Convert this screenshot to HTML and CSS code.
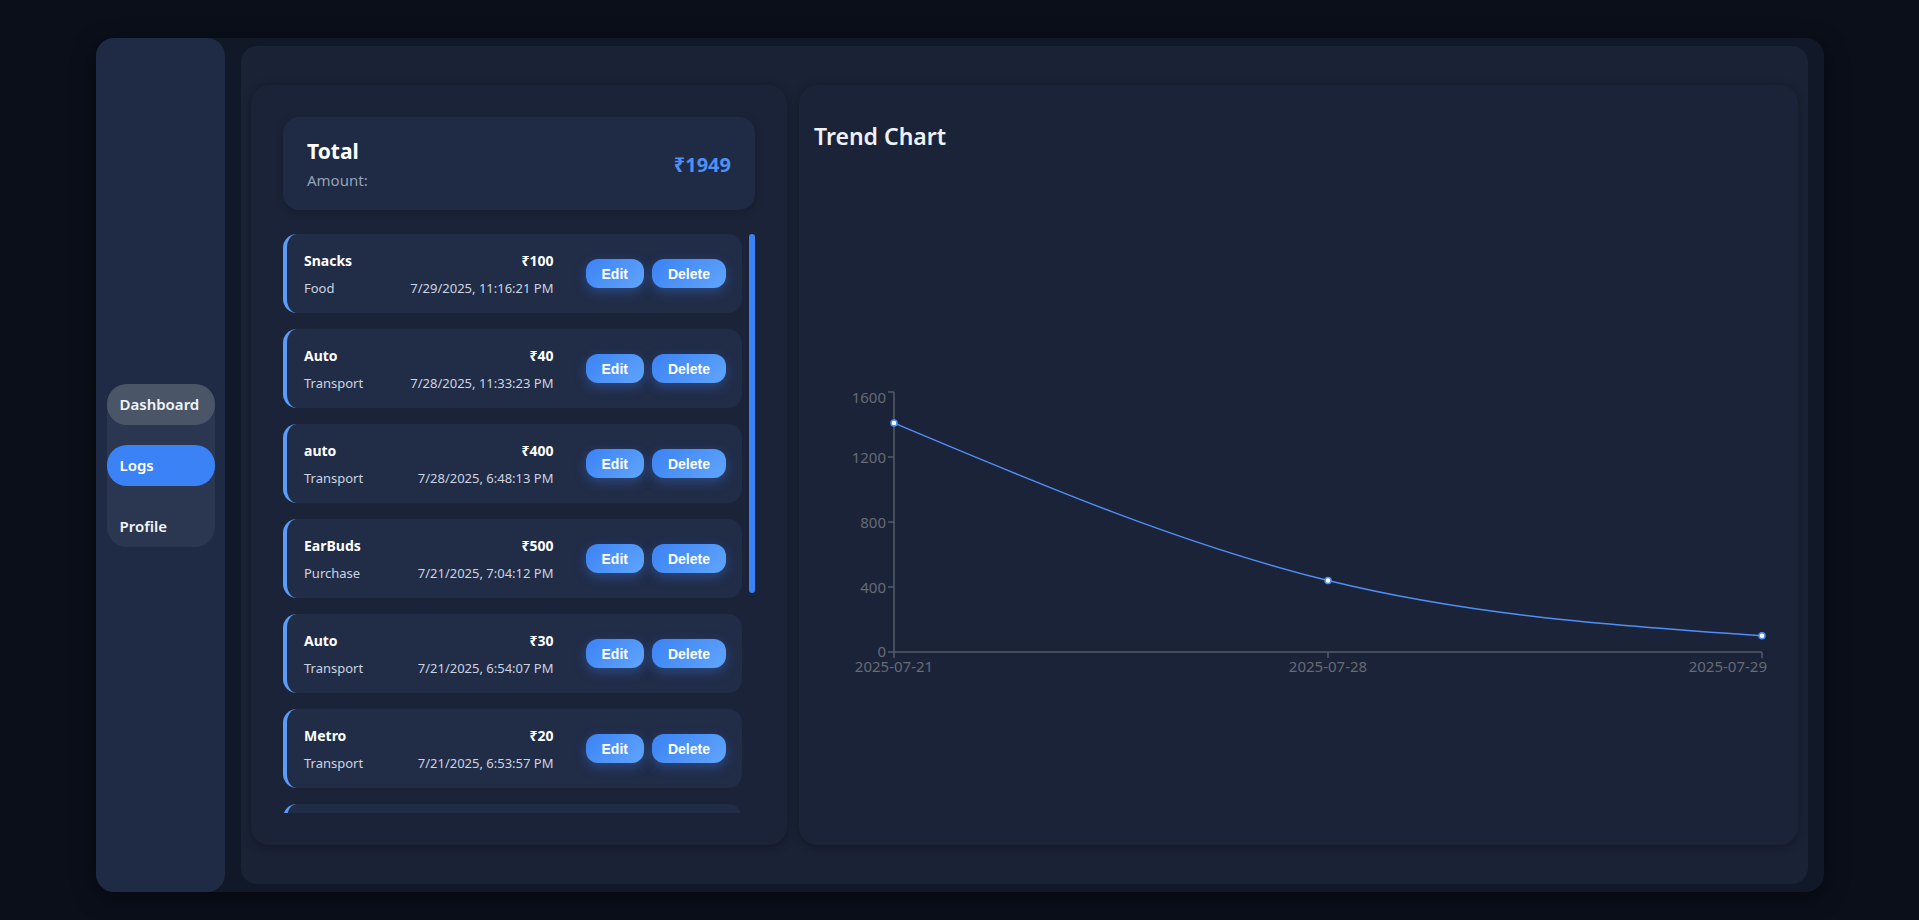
FILE: index.html
```html
<!DOCTYPE html>
<html lang="en">
<head>
<meta charset="utf-8">
<title>Logs</title>
<link rel="stylesheet" href="styles.css">
</head>
<body>
<div class="app">
  <aside class="sidebar">
    <nav class="nav">
      <a class="nav-item nav-dashboard">Dashboard</a>
      <a class="nav-item nav-active">Logs</a>
      <a class="nav-item">Profile</a>
    </nav>
  </aside>
  <main class="main">
    <section class="panel logs-panel">
      <div class="total-card">
        <div class="total-text">
          <div class="total-title">Total</div>
          <div class="total-sub">Amount:</div>
        </div>
        <div class="total-value">₹1949</div>
      </div>
      <div class="log-scroll">
        <div class="log-list">
          <div class="log-card">
            <div class="log-info">
              <div class="log-row"><span class="log-name">Snacks</span><span class="log-amount">₹100</span></div>
              <div class="log-row log-meta"><span>Food</span><span>7/29/2025, 11:16:21 PM</span></div>
            </div>
            <div class="log-actions"><button class="btn">Edit</button><button class="btn">Delete</button></div>
          </div>
          <div class="log-card">
            <div class="log-info">
              <div class="log-row"><span class="log-name">Auto</span><span class="log-amount">₹40</span></div>
              <div class="log-row log-meta"><span>Transport</span><span>7/28/2025, 11:33:23 PM</span></div>
            </div>
            <div class="log-actions"><button class="btn">Edit</button><button class="btn">Delete</button></div>
          </div>
          <div class="log-card">
            <div class="log-info">
              <div class="log-row"><span class="log-name">auto</span><span class="log-amount">₹400</span></div>
              <div class="log-row log-meta"><span>Transport</span><span>7/28/2025, 6:48:13 PM</span></div>
            </div>
            <div class="log-actions"><button class="btn">Edit</button><button class="btn">Delete</button></div>
          </div>
          <div class="log-card">
            <div class="log-info">
              <div class="log-row"><span class="log-name">EarBuds</span><span class="log-amount">₹500</span></div>
              <div class="log-row log-meta"><span>Purchase</span><span>7/21/2025, 7:04:12 PM</span></div>
            </div>
            <div class="log-actions"><button class="btn">Edit</button><button class="btn">Delete</button></div>
          </div>
          <div class="log-card">
            <div class="log-info">
              <div class="log-row"><span class="log-name">Auto</span><span class="log-amount">₹30</span></div>
              <div class="log-row log-meta"><span>Transport</span><span>7/21/2025, 6:54:07 PM</span></div>
            </div>
            <div class="log-actions"><button class="btn">Edit</button><button class="btn">Delete</button></div>
          </div>
          <div class="log-card">
            <div class="log-info">
              <div class="log-row"><span class="log-name">Metro</span><span class="log-amount">₹20</span></div>
              <div class="log-row log-meta"><span>Transport</span><span>7/21/2025, 6:53:57 PM</span></div>
            </div>
            <div class="log-actions"><button class="btn">Edit</button><button class="btn">Delete</button></div>
          </div>
          <div class="log-card log-card-peek"></div>
        </div>
        <div class="scrollbar"><div class="scroll-thumb"></div></div>
      </div>
    </section>
    <section class="panel chart-panel">
      <h2 class="chart-title">Trend Chart</h2>
      <div class="chart-wrap">
        <svg class="chart" width="938" height="300" viewBox="0 0 938 300">
          <g class="axis">
            <line x1="65" y1="5" x2="65" y2="265"/>
            <line x1="59" y1="5" x2="65" y2="5"/>
            <line x1="59" y1="70" x2="65" y2="70"/>
            <line x1="59" y1="135" x2="65" y2="135"/>
            <line x1="59" y1="200" x2="65" y2="200"/>
            <line x1="59" y1="265" x2="65" y2="265"/>
            <line x1="65" y1="265" x2="933" y2="265"/>
            <line x1="65" y1="265" x2="65" y2="271"/>
            <line x1="499" y1="265" x2="499" y2="271"/>
            <line x1="933" y1="265" x2="933" y2="271"/>
          </g>
          <g class="tick-label" text-anchor="end">
            <text x="57" y="16">1600</text>
            <text x="57" y="76">1200</text>
            <text x="57" y="141">800</text>
            <text x="57" y="206">400</text>
            <text x="57" y="270">0</text>
          </g>
          <g class="tick-label">
            <text x="65" y="285" text-anchor="middle">2025-07-21</text>
            <text x="499" y="285" text-anchor="middle">2025-07-28</text>
            <text x="938" y="285" text-anchor="end">2025-07-29</text>
          </g>
          <path class="line" d="M65,36.04C209.67,97.04,354.33,158.05,499,193.5C643.67,228.95,788.33,238.85,933,248.75"/>
          <g class="dot">
            <circle cx="65" cy="36.04" r="3"/>
            <circle cx="499" cy="193.5" r="3"/>
            <circle cx="933" cy="248.75" r="3"/>
          </g>
        </svg>
      </div>
    </section>
  </main>
</div>
</body>
</html>
```
FILE: styles.css
```css
* { box-sizing: border-box; }

html, body {
  margin: 0;
  height: 100%;
}

body {
  background: #0a0f1a;
  font-family: "Segoe UI", "Noto Sans", "DejaVu Sans", sans-serif;
  color: #e2e8f0;
  overflow: hidden;
}

.app {
  width: 1728px;
  height: 854px;
  margin: 38px auto 0 96px;
  display: flex;
  background: #111827;
  border-radius: 18px;
  box-shadow: 0 6px 24px rgba(0, 0, 0, 0.45);
}

.sidebar {
  width: 129px;
  flex-shrink: 0;
  background: #1f2a44;
  border-radius: 18px;
  display: flex;
  flex-direction: column;
  justify-content: center;
  align-items: center;
}

.nav {
  width: 108px;
  background: #2b3750;
  border-radius: 20px;
  display: flex;
  flex-direction: column;
  gap: 20px;
}

.nav-item {
  display: block;
  height: 41px;
  line-height: 41px;
  padding: 0 13px;
  border-radius: 20px;
  font-size: 15px;
  font-weight: 600;
  color: #f1f5f9;
  cursor: pointer;
}

.nav-dashboard { background: #4a5568; }
.nav-active { background: #3b82f6; color: #ffffff; }

.main {
  flex: 1;
  margin: 8px 16px;
  background: #1a2236;
  border-radius: 16px;
  padding: 39px 10px;
  display: grid;
  grid-template-columns: 536px 1fr;
  gap: 12px;
  min-width: 0;
}

.panel {
  background: #1b2338;
  border-radius: 18px;
  box-shadow: 0 2px 10px rgba(0, 0, 0, 0.3);
  min-height: 0;
  overflow: hidden;
}

.logs-panel {
  padding: 32px;
  display: flex;
  flex-direction: column;
  gap: 24px;
}

.total-card {
  height: 93px;
  flex-shrink: 0;
  background: #1f2a44;
  border-radius: 16px;
  padding: 0 24px;
  display: flex;
  align-items: center;
  justify-content: space-between;
  box-shadow: 0 2px 8px rgba(0, 0, 0, 0.2);
}

.total-title {
  font-size: 21px;
  font-weight: 700;
  color: #ffffff;
  line-height: 28px;
}

.total-sub {
  font-size: 15px;
  color: #94a3b8;
  line-height: 20px;
  margin-top: 5px;
}

.total-value {
  font-size: 20px;
  font-weight: 700;
  color: #4d90f6;
  margin-top: 2px;
}

.log-scroll {
  flex: 1;
  min-height: 0;
  display: flex;
  gap: 7px;
}

.log-list {
  flex: 1;
  min-width: 0;
  overflow: hidden;
  display: flex;
  flex-direction: column;
  gap: 16px;
}

.scrollbar {
  width: 6px;
  flex-shrink: 0;
}

.scroll-thumb {
  height: 359px;
  background: #3b82f6;
  border-radius: 3px;
}

.log-card {
  flex-shrink: 0;
  height: 79px;
  background: #212c47;
  border-left: 4px solid #5b9cf6;
  border-radius: 14px;
  padding: 0 16px 0 17px;
  display: flex;
  align-items: center;
  gap: 32px;
}

.log-info {
  flex: 1;
  display: flex;
  flex-direction: column;
  gap: 8px;
}

.log-row {
  display: flex;
  justify-content: space-between;
  align-items: baseline;
}

.log-name, .log-amount {
  font-size: 14px;
  font-weight: 700;
  color: #ffffff;
  line-height: 20px;
}

.log-meta {
  font-size: 13px;
  color: #cbd5e1;
  line-height: 18px;
}

.log-actions {
  display: flex;
  gap: 8px;
}

.btn {
  font-family: "Liberation Sans", Arial, sans-serif;
  font-size: 14px;
  font-weight: 700;
  color: #ffffff;
  background: linear-gradient(135deg, #3b82f6, #60a5fa);
  border: none;
  border-radius: 12px;
  padding: 6.5px 16px;
  line-height: 16px;
  box-shadow: 0 4px 12px rgba(59, 130, 246, 0.35);
  cursor: pointer;
}

.chart-panel {
  padding: 16px 15px;
  display: flex;
  flex-direction: column;
}

.chart-title {
  margin: 20px 0 0;
  font-size: 23px;
  font-weight: 600;
  color: #eef2f7;
  line-height: 31px;
}

.chart-wrap {
  margin: 235px 15px 0;
}

.chart { display: block; overflow: visible; }

.axis line {
  stroke: #555b66;
  stroke-width: 1.5;
}

.tick-label text {
  fill: #666b75;
  font-size: 15px;
  font-family: "Segoe UI", "Noto Sans", sans-serif;
}

.line {
  fill: none;
  stroke: #4f8ef7;
  stroke-width: 1.5;
}

.dot circle {
  fill: #ffffff;
  stroke: #4f8ef7;
  stroke-width: 1.5;
}
```
